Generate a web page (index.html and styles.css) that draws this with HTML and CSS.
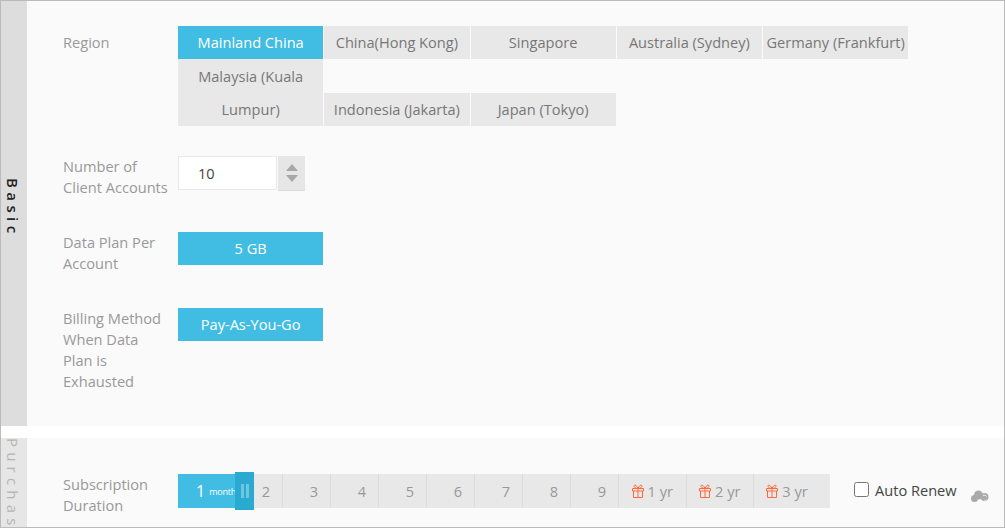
FILE: index.html
```html
<!DOCTYPE html>
<html>
<head>
    <link rel="stylesheet" href="styles.css">
</head>
<body>
    <div class="frame">
        <div class="section basic">
            <div class="tab tab-on"><span>Basic</span></div>
            <div class="fields">
                <div class="field field-region">
                    <div class="label">Region</div>
                    <div class="regions">
                        <div class="region-row">
                            <div class="opt on">Mainland China</div>
                            <div class="opt">China(Hong Kong)</div>
                            <div class="opt">Singapore</div>
                            <div class="opt">Australia (Sydney)</div>
                            <div class="opt">Germany (Frankfurt)</div>
                        </div>
                        <div class="region-row">
                            <div class="opt tall">Malaysia (Kuala Lumpur)</div>
                            <div class="opt">Indonesia (Jakarta)</div>
                            <div class="opt">Japan (Tokyo)</div>
                        </div>
                    </div>
                </div>
                <div class="field field-count">
                    <div class="label">Number of Client Accounts</div>
                    <div class="number">10</div>
                    <div class="stepper">
                        <span class="up"></span>
                        <span class="down"></span>
                    </div>
                </div>
                <div class="field field-plan">
                    <div class="label">Data Plan Per Account</div>
                    <div class="opt on">5 GB</div>
                </div>
                <div class="field">
                    <div class="label label-narrow">Billing Method When Data Plan is Exhausted</div>
                    <div class="opt on">Pay-As-You-Go</div>
                </div>
            </div>
        </div>
        <div class="section purchase">
            <div class="tab"><span>Purchase</span></div>
            <div class="fields">
                <div class="field">
                    <div class="label">Subscription Duration</div>
                    <div class="duration">
                        <div class="slider-on">
                            <span class="big">1</span><span class="small">month</span>
                            <div class="handle"><i></i><i></i></div>
                        </div>
                        <div class="cell first">2</div>
                        <div class="cell">3</div>
                        <div class="cell">4</div>
                        <div class="cell">5</div>
                        <div class="cell">6</div>
                        <div class="cell">7</div>
                        <div class="cell">8</div>
                        <div class="cell">9</div>
                        <div class="cell yr">
                            <svg class="gift" viewBox="0 0 12 14"><path d="M.5 4.500h11v2.500h-11zM1.500 7v6.500h9v-6.500M6 4.500v9M6 4.500c-1-2.500-2.800-4-3.700-3.200s.2 3.200 3.700 3.200zM6 4.500c1-2.500 2.800-4 3.700-3.200s-.2 3.200-3.700 3.200z"/></svg>1 yr
                        </div>
                        <div class="cell yr">
                            <svg class="gift" viewBox="0 0 12 14"><path d="M.5 4.500h11v2.500h-11zM1.500 7v6.500h9v-6.500M6 4.500v9M6 4.500c-1-2.500-2.800-4-3.700-3.200s.2 3.200 3.700 3.200zM6 4.500c1-2.500 2.800-4 3.700-3.200s-.2 3.200-3.700 3.200z"/></svg>2 yr
                        </div>
                        <div class="cell yr last">
                            <svg class="gift" viewBox="0 0 12 14"><path d="M.5 4.500h11v2.500h-11zM1.500 7v6.500h9v-6.500M6 4.500v9M6 4.500c-1-2.500-2.800-4-3.700-3.200s.2 3.200 3.700 3.200zM6 4.500c1-2.500 2.800-4 3.700-3.200s-.2 3.200-3.700 3.200z"/></svg>3 yr
                        </div>
                    </div>
                    <label class="renew"><input type="checkbox">Auto Renew</label>
                    <svg class="cloud" viewBox="0 0 18 12">
                        <circle cx="7.500" cy="5" r="4.500"/>
                        <circle cx="13.500" cy="7" r="4"/>
                        <circle cx="3.500" cy="8.500" r="3.500"/>
                        <path class="cloud-mark" d="M12 5.500a2.500 2.500 0 0 1 3.500 1M15.500 9.500a2 2 0 0 1-2 .8"/>
                    </svg>
                </div>
            </div>
        </div>
    </div>
</body>
</html>
```

FILE: styles.css
```css
* {
    box-sizing: border-box;
}
body {
    margin: 0;
    background-color: #fff;
    font-family: "Open Sans", "Noto Sans", sans-serif;
    font-size: 14.6px;
    overflow: hidden;
}
.frame {
    height: 528px;
    border: 1px solid #bbb;
    overflow: hidden;
}
.section {
    display: flex;
    background-color: #fafafa;
}
.basic {
    height: 425px;
    margin-bottom: 12px;
}
.purchase {
    height: 200px;
}
.tab {
    width: 26px;
    flex-shrink: 0;
    display: flex;
    justify-content: center;
    padding-right: 3px;
    background-color: #e6e6e6;
    color: #b5b5b5;
    font-size: 15px;
    letter-spacing: 5.2px;
}
.tab-on {
    background-color: #ddd;
    color: #222;
    font-weight: 600;
    letter-spacing: 4.4px;
    padding-top: 177px;
}
.tab span {
    writing-mode: vertical-rl;
    line-height: 23px;
}
.fields {
    flex: 1;
    padding-left: 36px;
    padding-top: 25px;
}
.purchase .fields {
    padding-top: 36px;
}
.field {
    display: flex;
    align-items: flex-start;
}
.field-region {
    margin-bottom: 30px;
}
.field-count {
    margin-bottom: 34px;
}
.field-plan {
    margin-bottom: 34px;
}
.label {
    width: 115px;
    padding-right: 3px;
    flex-shrink: 0;
    color: #999;
    line-height: 21px;
}
.label-narrow {
    padding-right: 10px;
}
.field-region .label {
    padding-top: 6px;
}
.opt {
    width: 145.250px;
    min-height: 33px;
    background-color: #e8e8e8;
    color: #777;
    text-align: center;
    line-height: 33px;
    white-space: nowrap;
}
.opt.on {
    background-color: #41bde3;
    color: #fff;
}
.opt.tall {
    white-space: normal;
    height: 67px;
    padding: 1px 12px 0;
}
.region-row {
    display: flex;
    align-items: flex-end;
    gap: 1px;
}
.number {
    width: 99px;
    height: 34px;
    border: 1px solid #e8e8e8;
    background-color: #fff;
    color: #444;
    padding-left: 19px;
    line-height: 33px;
}
.stepper {
    width: 27px;
    height: 35px;
    margin-left: 1px;
    background-color: #e6e6e6;
    border-bottom: 1px solid #dcdcdc;
    display: flex;
    flex-direction: column;
    align-items: center;
    justify-content: center;
    gap: 4px;
}
.up, .down {
    width: 0;
    height: 0;
    border-left: 6px solid transparent;
    border-right: 6px solid transparent;
}
.up {
    border-bottom: 7px solid #a8a8a8;
}
.down {
    border-top: 7px solid #a8a8a8;
}
.duration {
    width: 652px;
    height: 34px;
    background-color: #e8e8e8;
    display: flex;
    color: #999;
    line-height: 34px;
}
.slider-on {
    position: relative;
    width: 76px;
    flex-shrink: 0;
    background-color: #41bde3;
    color: #fff;
    padding-left: 18px;
    white-space: nowrap;
}
.big {
    font-size: 16px;
}
.small {
    font-size: 9px;
    margin-left: 4px;
    letter-spacing: -0.2px;
    vertical-align: 2px;
}
.handle {
    position: absolute;
    left: 57px;
    top: -2px;
    width: 19px;
    height: 38px;
    background-color: #2aaad0;
    display: flex;
    justify-content: center;
    align-items: center;
    gap: 2px;
}
.handle i {
    width: 3px;
    height: 14px;
    background-color: #6ec6e0;
}
.cell {
    width: 48px;
    flex-shrink: 0;
    border-right: 1px solid #dcdcdc;
    text-align: center;
    padding-left: 15px;
}
.cell.first {
    width: 29px;
    padding-left: 0;
    padding-right: 4px;
}
.cell.yr {
    width: 67.500px;
    padding-left: 0;
    display: flex;
    justify-content: center;
    align-items: center;
    gap: 4px;
}
.cell.last {
    width: 76px;
    border-right: 0;
    padding-right: 10px;
}
.gift {
    width: 12px;
    height: 14px;
    fill: none;
    stroke: #ff6a3c;
    stroke-width: 1;
}
.renew {
    display: flex;
    align-items: center;
    margin-left: 24px;
    margin-top: 5px;
    height: 21px;
    color: #444;
}
.renew input {
    width: 15px;
    height: 15px;
    margin: 0 6px 0 0;
}
.cloud {
    width: 18px;
    height: 12px;
    margin-left: 14px;
    margin-top: 16px;
    fill: #aaa;
}
.cloud-mark {
    fill: none;
    stroke: #eee;
    stroke-width: 1;
}
```
